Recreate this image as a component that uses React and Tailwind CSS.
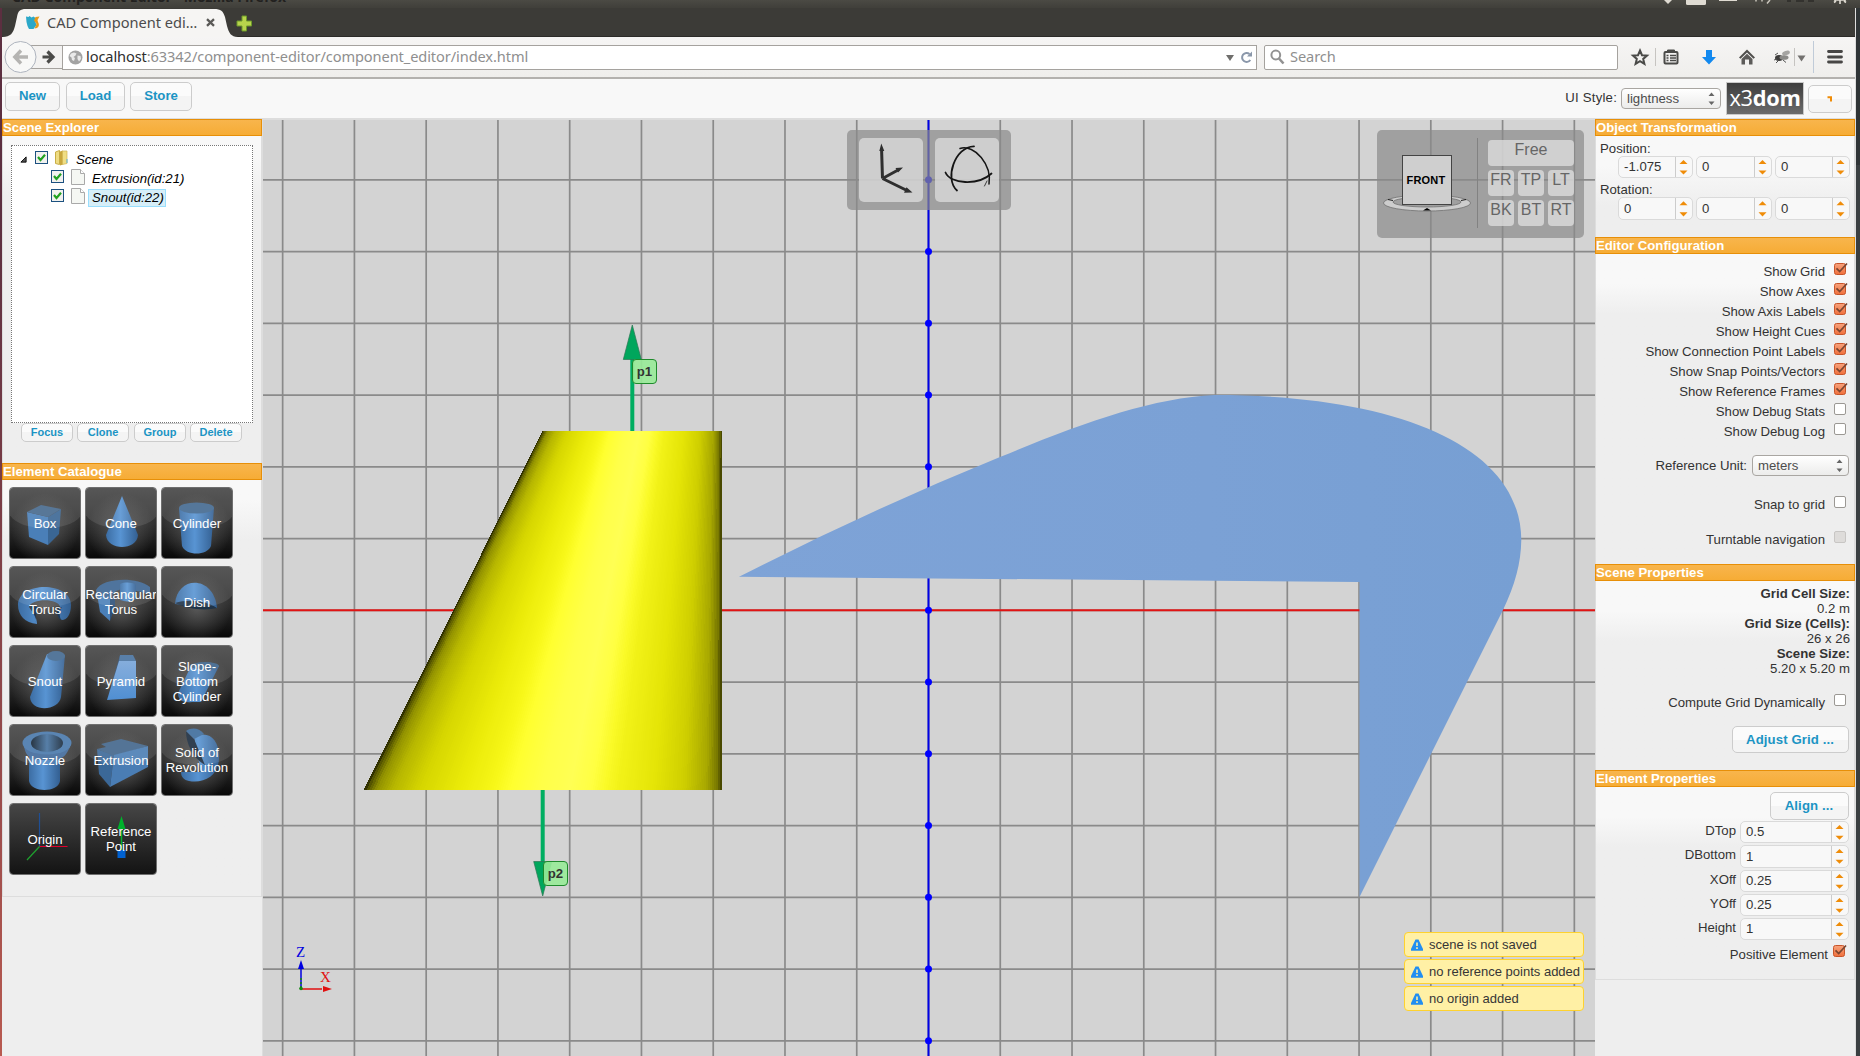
import React from "react";

const lerp = (a, b, t) => a + (b - a) * t;

/* ---------- small shared widgets ---------- */

function PanelHeading({ children }) {
  return (
    <div className="h-[17px] shrink-0 w-[260px] whitespace-nowrap border border-[#e78f08] bg-linear-to-b from-[#f8b54c] to-[#f6ac35] text-[13.200px] font-bold leading-[15px] text-white">
      {children}
    </div>
  );
}

function PanelBody({ className, children }) {
  return (
    <div className={"w-[260px] shrink-0 border-x border-[#dddddd] bg-[#eeeeee] " + className}>{children}</div>
  );
}

function Btn({ className, children }) {
  return (
    <button
      className={
        "flex items-center justify-center rounded-[5px] border border-[#cccccc] bg-linear-to-b from-[#fbfbfb] from-50% to-[#f4f4f4] to-50% font-bold text-[#1c94c4] " +
        className
      }
    >
      {children}
    </button>
  );
}

function Spinner({ value, className }) {
  return (
    <div className={"flex rounded-[5px] border border-[#dadada] bg-[#f8f8f8] " + className}>
      <div className="flex flex-1 items-center pl-[5px] text-[13.200px] text-[#333]">{value}</div>
      <svg className="h-full w-[17px] shrink-0 border-l border-[#cccccc]" viewBox="0 0 16 20" preserveAspectRatio="none">
        <path d="M3.500 7h8l-4-4zM3.500 13.500h8l-4 4z" fill="#ef8c08" />
      </svg>
    </div>
  );
}

function Check({ on, disabled }) {
  if (on)
    return (
      <svg width="14" height="14" viewBox="0 0 14 14" className="shrink-0">
        <defs>
          <linearGradient id="ck" x2="0" y2="1">
            <stop offset="0" stopColor="#f7a27c" />
            <stop offset="1" stopColor="#f0703c" />
          </linearGradient>
        </defs>
        <rect x="0.5" y="1.5" width="11" height="11" rx="2" fill="url(#ck)" stroke="#c8552a" />
        <path d="M2.500 6.300l3.200 3.200L13 1.500" fill="none" stroke="#7a4630" strokeWidth="1.700" />
      </svg>
    );
  return (
    <div className="flex h-[14px] w-[14px] shrink-0 items-end">
      <div className={"mb-px h-3 w-3 rounded-[2px] border " + (disabled ? "border-[#c8c6c4] bg-[#dedcda]" : "border-[#9b9894] bg-white")} />
    </div>
  );
}

function Select({ value, className }) {
  return (
    <div className={"flex items-center justify-between rounded-[4px] border border-[#a9a6a2] bg-linear-to-b from-white to-[#ececeb] pl-[5px] pr-[5px] text-[13.200px] text-[#4c4c4c] " + className}>
      <span>{value}</span>
      <svg width="7" height="13" viewBox="0 0 7 13">
        <path d="M0.500 4h6L3.500 0.500zM0.500 9.500h6L3.500 13z" fill="#666" />
      </svg>
    </div>
  );
}

/* ---------- browser chrome ---------- */

function DesktopBar() {
  return (
    <div className="flex h-2 shrink-0 justify-between overflow-hidden bg-linear-to-b from-[#4b4a44] to-[#403f3a]">
      <div className="-mt-[13px] ml-3 h-[18px] whitespace-pre font-['Open_Sans',sans-serif] text-[14px] font-bold leading-[19px] text-[#22211f]">
        {"CAD Component Editor - Mozilla Firefox"}
      </div>
      <svg width="210" height="8" viewBox="1650 0 210 8">
        <path d="M1664 0h8l-4 4z" fill="#dfdbd2" />
        <rect x="1686" y="-4" width="20" height="9" rx="1.5" fill="#dfdbd2" />
        <rect x="1719" y="-3" width="18" height="4" fill="#dfdbd2" />
        <path d="M1756 0v1.5M1762 0v1.5M1770 0l-3 3.5" stroke="#c9c5bc" strokeWidth="1.5" />
        <path d="M1787 1h4M1796 1h8M1808 1h6" stroke="#2c2b28" strokeWidth="1.5" />
        <path d="M1834 0h12M1840 0v4M1836 1l-2 1.500M1844 1l2 1.500" stroke="#dfdbd2" strokeWidth="1.600" fill="none" />
      </svg>
    </div>
  );
}

function TabStrip() {
  return (
    <div className="flex h-[29px] shrink-0 border-b border-[#2c2b28] bg-[#3c3b37]">
      <div className="relative flex h-[29px] w-[234px] items-center">
        <svg className="absolute left-0 top-0" width="238" height="29" viewBox="2 8 238 29">
          <path d="M2 37C11 37 13 33 15 26L17 17C18 11 20 9 26 9H214C221 9 223 11 225 17L227 26C229 33 231 37 238 37Z" fill="#f6f5f3" />
        </svg>
        <svg className="relative ml-6 shrink-0" width="14" height="13" viewBox="0 0 14 13">
          <path d="M0 0.500l2.500.5 1-1 2 1.500 2-1 2 1.500-.5 3 1.500 4-3 4H3L1.500 10 0.500 6z" fill="#2ba8c8" />
          <path d="M13.500 0.500l-4 .5-1.500 3.500 2.500 3.500-2 4.500c4 0 5.500-3.500 3.500-6.500l-.5-2z" fill="#e79a1c" />
        </svg>
        <span className="relative ml-[7px] w-[151px] whitespace-nowrap font-['Noto_Sans',sans-serif] text-[14.600px] text-[#4c4c4c]">CAD Component edi…</span>
        <svg className="relative ml-[8px]" width="9" height="9" viewBox="0 0 9 9">
          <path d="M1 1.200l7 6.600M8 1.200L1 7.800" stroke="#5b5a57" strokeWidth="2.300" />
        </svg>
      </div>
      <svg className="mt-[7px]" width="17" height="17" viewBox="0 0 17 17">
        <path d="M6 1h4.500v5H15.500v5H10.500v5H6v-5H1V6h5z" fill="#b8d44c" stroke="#6d9a2a" />
      </svg>
    </div>
  );
}

function NavBar() {
  return (
    <div className="flex h-[42px] shrink-0 items-center border-b-2 border-[#b3b1ae] bg-linear-to-b from-[#f6f5f4] to-[#efeeec]">
      <svg className="ml-[2px] shrink-0" width="58" height="34" viewBox="4 40 58 34">
        <rect x="22" y="45.500" width="42" height="23" fill="#f3f2f1" stroke="#a5a29e" />
        <circle cx="20.500" cy="57" r="15.500" fill="#f8f8f7" stroke="#aeb4be" />
        <path d="M28 57H16M21 50.500L14.800 57l6.200 6.500" fill="none" stroke="#b5b4b2" strokeWidth="3.400" />
        <path d="M42.500 57h9M47.500 51.500l5.500 5.500-5.500 5.500" fill="none" stroke="#4a4a48" strokeWidth="3.200" />
      </svg>
      <div className="flex h-[25px] w-[1195px] shrink-0 items-center border border-[#a5a29e] bg-white">
        <svg className="ml-[5px] shrink-0" width="15" height="15" viewBox="0 0 15 15">
          <circle cx="7.500" cy="7.500" r="7" fill="#a3a3a3" />
          <path d="M3 3.500l3-1 2.500 1-1 2-2 1.500 1.500 1-1 3-2-1-.5-2.500L1.500 6zM9.500 5.500l3 .5.500 3-2 2.500-1.500-2.500z" fill="#e9e9e9" />
        </svg>
        <div className="ml-[3px] flex-1 whitespace-nowrap font-['Noto_Sans',sans-serif] text-[14.600px] text-[#8f8f8f]">
          <span className="tracking-[-0.100px] text-[#2e2e2e]">localhost</span>
          <span className="tracking-[-0.090px]">:63342/component-editor/component_editor/index.html</span>
        </div>
        <svg width="32" height="14" viewBox="0 0 32 14" className="mr-px">
          <path d="M3 5h8L7 11z" fill="#6f6e6c" />
          <path d="M26.500 4a4.500 4.500 0 1 0 .8 6" fill="none" stroke="#8a97aa" strokeWidth="2" />
          <path d="M24 6.500h5V1.500z" fill="#8a97aa" />
        </svg>
      </div>
      <div className="ml-[7px] flex h-[25px] w-[354px] shrink-0 items-center rounded-[2px] border border-[#a5a29e] bg-white">
        <svg className="ml-[5px]" width="15" height="16" viewBox="0 0 15 16">
          <circle cx="5.800" cy="6" r="4.400" fill="none" stroke="#929292" strokeWidth="2" />
          <path d="M9 9.500l4.500 5" stroke="#929292" strokeWidth="2.600" />
        </svg>
        <span className="ml-[5px] font-['Noto_Sans',sans-serif] text-[14.600px] tracking-[-0.100px] text-[#8f8f8f]">Search</span>
      </div>
      <svg className="shrink-0" width="238" height="40" viewBox="1618 37 238 40">
        <path d="M1640 50.500l2 4.700 5 .4-3.800 3.300 1.200 5-4.400-2.700-4.400 2.700 1.200-5-3.800-3.300 5-.4z" fill="none" stroke="#4a4a48" strokeWidth="2" />
        <path d="M1655.500 48v18" stroke="#c6c4c1" />
        <rect x="1664.500" y="52" width="13" height="11.500" rx="1" fill="none" stroke="#4a4a48" strokeWidth="2" />
        <path d="M1667.500 52v-2h7v2" fill="#4a4a48" stroke="#4a4a48" />
        <path d="M1666.500 55.500h2M1670 55.500h6M1666.500 58h2M1670 58h6M1666.500 60.500h2M1670 60.500h6" stroke="#4a4a48" strokeWidth="1.300" />
        <path d="M1706 50h6v7h4l-7 7.500-7-7.500h4z" fill="#1289ef" />
        <path d="M1747 49.500l8 8-1.500 1.300-6.500-6.300-6.500 6.300-1.500-1.300z" fill="#4f4e4c" />
        <path d="M1741.500 59l5.500-5.300 5.500 5.300v5.500h-3.500v-5h-4v5h-3.500z" fill="#5c5b59" />
        <ellipse cx="1779" cy="58" rx="4" ry="3" fill="#3d3c3b" />
        <ellipse cx="1786" cy="53" rx="4" ry="2.200" fill="#a5a4a2" transform="rotate(-18 1786 53)" />
        <ellipse cx="1784" cy="57.500" rx="4.500" ry="2.300" fill="#8b8a88" />
        <path d="M1775 55l3-2M1774 60l3-1M1778 61l-2 2M1783 60l3 2.500" stroke="#555" />
        <path d="M1794.500 48v18" stroke="#c6c4c1" />
        <path d="M1797.500 55.500h8l-4 6z" fill="#73716f" />
        <path d="M1813.500 41v32" stroke="#c0cbd8" />
        <path d="M1828.500 51.500h13M1828.500 57h13M1828.500 62h13" stroke="#474645" strokeWidth="2.800" strokeLinecap="round" />
      </svg>
    </div>
  );
}

/* ---------- page header ---------- */

function PageHeader() {
  return (
    <header className="flex h-10 shrink-0 justify-between border-b border-[#dddddd] bg-[#f8f8f8] text-[13.200px]">
      <div className="flex pl-[3px] pt-[3px]">
        <Btn className="h-[29px] w-[55px] pb-px">New</Btn>
        <Btn className="ml-[6px] h-[29px] w-[59px] pb-px">Load</Btn>
        <Btn className="ml-[5px] h-[29px] w-[62px] pb-px">Store</Btn>
      </div>
      <div className="flex pr-[3px] text-[#333]">
        <span className="mt-[11px] leading-[16px] tracking-[0.200px]">UI Style:</span>
        <Select value="lightness" className="ml-[4px] mt-[9px] h-[21px] w-[100px]" />
        <div className="ml-[5px] mt-[3px] flex h-[33px] w-[78px] items-center justify-center border border-[#c9c9c9] bg-linear-to-b from-[#3d3d3d] to-[#6c6c6c] font-['Open_Sans',sans-serif] text-[21.800px] leading-none tracking-[-0.300px] text-white">
          <span className="pb-[1px]">
            x3<b>dom</b>
          </span>
        </div>
        <Btn className="ml-1 mt-[6px] h-[28px] w-[44px]">
          <svg width="6" height="6" viewBox="0 0 6 6">
            <path d="M0.500 1.200h3.500v4.300" fill="none" stroke="#ef8c08" strokeWidth="2" />
          </svg>
        </Btn>
      </div>
    </header>
  );
}

/* ---------- left side ---------- */

function TreeCheck() {
  return (
    <svg width="13" height="13" viewBox="0 0 13 13" className="shrink-0">
      <rect x="0.500" y="0.500" width="12" height="12" fill="#f1f1ef" stroke="#1c5180" />
      <path d="M3 6l2.500 3L10 3.800" fill="none" stroke="#21a121" strokeWidth="2.200" />
    </svg>
  );
}

function PageIcon() {
  return (
    <svg width="14" height="16" viewBox="0 0 14 16" className="shrink-0">
      <path d="M0.500 0.500h9l4 4v11h-13z" fill="#f5f7f3" stroke="#a9a9a9" />
      <path d="M9.500 0.500v4h4" fill="#fff" stroke="#a9a9a9" />
    </svg>
  );
}

function SceneExplorer() {
  return (
    <PanelBody className="h-[327px] bg-linear-to-b from-[#f8f8f8] from-[20px] to-[#eeeeee] to-[60px] pt-[9px]">
      <div className="ml-2 h-[278px] w-[242px] border border-dotted border-[#777] bg-white text-[13.200px] italic text-black">
        <div className="mt-[4px] flex h-[19px] items-center">
          <svg className="ml-2" width="7" height="7" viewBox="0 0 8 7">
            <path d="M1 6.500h6v-6z" fill="#555" stroke="#000" />
          </svg>
          <div className="ml-2 -mt-1"><TreeCheck /></div>
          <svg className="ml-[7px] -mt-[3px]" width="13" height="16" viewBox="0 0 13 16">
            <path d="M0.500 2l4-1.500v14l-4-1z" fill="#efdc82" stroke="#c9ae45" />
            <path d="M5 1.500l3-1v14l-3 1z" fill="#c9a63c" />
            <path d="M7.500 1h4.500v12.500l-4.500 1z" fill="#f0dd83" stroke="#d1b653" strokeWidth=".7" />
            <path d="M12 9v4" stroke="#5cb4e0" />
          </svg>
          <span className="ml-2">Scene</span>
        </div>
        <div className="flex h-[19px] items-center">
          <div className="ml-[39px] -mt-1"><TreeCheck /></div>
          <div className="ml-[7px] -mt-[3px]"><PageIcon /></div>
          <span className="ml-[7px]">Extrusion(id:21)</span>
        </div>
        <div className="flex h-[19px] items-center">
          <div className="ml-[39px] -mt-1"><TreeCheck /></div>
          <div className="ml-[7px] -mt-[3px]"><PageIcon /></div>
          <span className="ml-[3px] flex h-[18px] w-[78px] items-center whitespace-nowrap border border-[#99defd] bg-[#d6eef8] pl-[3px]">Snout(id:22)</span>
        </div>
      </div>
      <div className="ml-[18px] flex text-[11px]">
        <Btn className="h-[19px] w-[52px]">Focus</Btn>
        <Btn className="ml-1 h-[19px] w-[52px]">Clone</Btn>
        <Btn className="ml-[5px] h-[19px] w-[52px]">Group</Btn>
        <Btn className="ml-1 h-[19px] w-[52px]">Delete</Btn>
      </div>
    </PanelBody>
  );
}

const D = "url(#bDark)";
const B = "url(#bSide)";
const F = "url(#bFlat)";

const TILES = [
  ["Box", <><path d="M18 25l21 5v28l-19-8z" fill="#4a7fb8" /><path d="M39 30l13-8-2 25-11 11z" fill="#3a6694" /><path d="M18 25l14-7 20 4-13 8z" fill="#46688c" /></>],
  ["Cone", <path d="M37 9L21 48c1 16 31 16 32 0z" fill={B} />],
  ["Cylinder", <><path d="M18 21l3 38c4 10 25 10 29 0l3-38z" fill={B} /><ellipse cx="35.500" cy="21" rx="17.500" ry="5.500" fill="#42688f" /></>],
  ["Circular\nTorus", <><path d="M9 39C9 15 62 15 62 39c0 9-4 15-9 15-4-2-5-7-2-13-1-9-29-9-31 0 3 5 8 9 8 17C16 57 9 49 9 39z" fill={B} /><path d="M27 58c-1-7 0-12 3-16-3-2-6-2-8-1 3 6 5 11 5 17zM52 54c-2-6-2-9 1-13l-5 2c0 5 1 9 4 11z" fill="#1d3a5b" /></>],
  ["Rectangular\nTorus", <><path d="M11 24c6-12 40-14 54-3v7l-13-3c-9-3-20-3-24 3l-3 7-13-5z" fill="#3b6592" /><path d="M35 18c5-2 12-2 16 1v14c-5 3-11 3-16 1z" fill={B} /><path d="M12 28l13 5v22l-10-9z" fill="#4a7fb8" /><path d="M25 33l5-3v10l-5 15z" fill="#2c5079" /></>],
  ["Dish", <><path d="M14 38C16 9 53 9 56 42z" fill={B} /><path d="M14 37c12-4 30-3 42 5-12 3-30 1-42-5z" fill="#1f3348" /></>],
  ["Snout", <><path d="M38 9l-17 43c1 16 29 14 31 0l4-42z" fill={B} /><ellipse cx="47" cy="11" rx="9" ry="5" fill="#42688f" /></>],
  ["Pyramid", <><path d="M35 10l-13 45 13-38z" fill="#2f5075" /><path d="M35 10l13 0 3 6H34z" fill="#47719f" /><path d="M34 16h17v37l-29 2z" fill={F} /></>],
  ["Slope-\nBottom\nCylinder", <><path d="M30 21L17 48c0 7 4 10 14 9h9l18-36z" fill={B} /><ellipse cx="44" cy="21" rx="14" ry="4" fill="#3c6389" /></>],
  ["Nozzle", <><path d="M20 25v32c2 12 29 12 31 0V25z" fill={B} /><path d="M14 17c2 14 5 17 14 19h18c9-2 12-5 16-16z" fill="#40699a" /><ellipse cx="38" cy="19" rx="24.500" ry="11.500" fill="#4878ab" /><ellipse cx="38" cy="19" rx="16" ry="9" fill={D} /></>],
  ["Extrusion", <><path d="M12 25l17 6-4 32-11-13z" fill="#3b6898" /><path d="M16 20l20-5 27 7-34 10-17-7 9-2z" fill="#41658b" /><path d="M29 31l34-9v21L25 63z" fill="#4a7db4" /></>],
  ["Solid of\nRevolution", <><path d="M33 13c15-8 26 4 25 21 0 18-16 26-30 23-5-1-8-4-8-9l20 0z" fill={B} /><path d="M25 7c0 14 8 28 19 34L33 15z" fill="#1a2b3e" /><path d="M25 7c6-4 13-3 18 3l-10 5z" fill="#3d6b9b" /></>],
  ["Origin", <><path d="M30.500 10v33" stroke="#1f4f95" strokeWidth="1.200" /><path d="M30.500 43.500h28" stroke="#e0002c" strokeWidth="1.200" /><path d="M30.500 43.500L18 57" stroke="#1fa22f" strokeWidth="1.200" /></>],
  ["Reference\nPoint", <><path d="M36.500 13l4 13h-8z" fill="#00b22c" /><path d="M36.500 25v22" stroke="#00b22c" strokeWidth="1.500" /><rect x="32.500" y="47" width="8" height="8" fill="#0061d1" /></>],
];

function Tile({ name, shape, flat }) {
  return (
    <div className="relative flex h-[72px] w-[72px] items-center justify-center overflow-hidden rounded-[4px] border border-[#6f6f6f]">
      <svg className="absolute left-0 top-0" width="72" height="72" viewBox="1 1 72 72">
        <rect width="74" height="74" fill={flat ? "url(#tFlat)" : "url(#tDark)"} />
        {!flat && <ellipse cx="36" cy="42" rx="34" ry="36" fill="url(#tGlow)" />}
        {shape}
        {!flat && <path d="M0 0h73v26C66 46 7 46 0 26z" fill="#fff" opacity=".1" />}
      </svg>
      <span className="relative -mx-2 whitespace-pre text-center text-[13.200px] leading-[15px] text-white">{name}</span>
    </div>
  );
}

function ElementCatalogue() {
  return (
    <PanelBody className="h-[417px] border-b bg-linear-to-b from-[#f8f8f8] from-[20px] to-[#eeeeee] to-[60px] pt-[7px]">
      <svg width="0" height="0" className="absolute">
        <defs>
          <linearGradient id="tDark" x2="0" y2="1"><stop offset="0" stopColor="#444" /><stop offset=".5" stopColor="#303030" /><stop offset="1" stopColor="#050505" /></linearGradient>
          <linearGradient id="tFlat" x2="0" y2="1"><stop offset="0" stopColor="#474747" /><stop offset="1" stopColor="#111" /></linearGradient>
          <radialGradient id="tGlow"><stop offset="0" stopColor="#6c6c6c" stopOpacity=".7" /><stop offset="1" stopColor="#666" stopOpacity="0" /></radialGradient>
          <linearGradient id="bSide"><stop offset="0" stopColor="#3c6da3" /><stop offset=".45" stopColor="#5894d3" /><stop offset="1" stopColor="#335f91" /></linearGradient>
          <linearGradient id="bFlat" x2="0" y2="1"><stop offset="0" stopColor="#77a4d8" /><stop offset="1" stopColor="#508fd2" /></linearGradient>
          <linearGradient id="bDark"><stop offset="0" stopColor="#111f2e" /><stop offset=".5" stopColor="#44719f" /><stop offset="1" stopColor="#17283a" /></linearGradient>
        </defs>
      </svg>
      <div className="ml-[6px] grid w-[224px] grid-cols-[repeat(3,72px)] gap-x-1 gap-y-[7px]">
        {TILES.map(([name, shape], i) => (
          <Tile key={name} name={name} shape={shape} flat={i > 11} />
        ))}
      </div>
    </PanelBody>
  );
}

/* ---------- 3D view ---------- */

const STOPS = [
  [0, 30, 0], [0.008, 80, 0], [0.03, 145, 0], [0.07, 182, 0], [0.14, 214, 0], [0.24, 234, 8],
  [0.33, 247, 24], [0.38, 255, 48], [0.46, 255, 72], [0.54, 255, 84], [0.6, 255, 66], [0.64, 250, 40], [0.68, 242, 24],
  [0.79, 228, 6], [0.88, 206, 0], [0.95, 168, 0], [0.985, 120, 0], [1, 60, 0],
];

function yellowAt(u) {
  const i = Math.max(1, STOPS.findIndex((s) => s[0] >= u));
  const a = STOPS[i - 1];
  const b = STOPS[i];
  const t = (u - a[0]) / (b[0] - a[0]);
  const v = Math.round(lerp(a[1], b[1], t));
  return `rgb(${v},${v},${Math.round(lerp(a[2], b[2], t))})`;
}

function Snout() {
  const n = 160;
  const bend = (u) => u + 0.14 * u * (1 - u);
  return (
    <g shapeRendering="crispEdges">
      {Array.from({ length: n }, (_, i) => {
        const u0 = i / n;
        const top = lerp(542.5, 721.7, u0);
        const bot = lerp(364, 721.7, bend(u0));
        return <path key={i} d={`M${top} 431H721.700V789.500H${bot}Z`} fill={yellowAt((i + 0.5) / n)} />;
      })}
    </g>
  );
}

function Viewport() {
  const xs = Array.from({ length: 19 }, (_, i) => 928.5 + (i - 9) * 71.76);
  const ys = Array.from({ length: 13 }, (_, i) => 610.3 + (i - 6) * 71.75);
  return (
    <main className="relative h-[937px] w-[1332px] shrink-0 overflow-hidden border-t border-[#dddddd] bg-[#d3d3d3]">
      <svg width="1332" height="936" viewBox="263 120 1332 936">
        <defs>
          <linearGradient id="ext"><stop offset="0" stopColor="#7ea3d7" /><stop offset=".6" stopColor="#7ba1d5" /><stop offset="1" stopColor="#779fd3" /></linearGradient>
        </defs>
        {xs.map((x) => <path key={x} d={`M${x} 119V1056`} stroke="#8a8a8a" strokeWidth="1.700" />)}
        {ys.map((y) => <path key={y} d={`M263 ${y}H1595`} stroke="#8a8a8a" strokeWidth="1.700" />)}
        <path d="M263 610.200H1595" stroke="#e01414" strokeWidth="2" />
        <path d="M928.500 119V1056" stroke="#0000e6" strokeWidth="2" />
        {ys.map((y) => <circle key={y} cx="928.500" cy={y} r="3.500" fill="#0000ff" />)}
        <path d="M739 576.800Q870 510 1000 457C1080 424 1150 398 1215 395C1400 395 1521 447 1521.300 540C1521 563 1515 585 1503 610L1359.500 897V582Z" fill="url(#ext)" />
        <path d="M632.300 358V432" stroke="#00ae62" strokeWidth="4" />
        <path d="M632.300 325l9 34.500h-18z" fill="#00a65c" stroke="#2c7653" strokeWidth=".7" />
        <path d="M542.700 789V862" stroke="#00ae62" strokeWidth="4" />
        <path d="M542.700 896l9-34.500h-18z" fill="#00a65c" stroke="#2c7653" strokeWidth=".7" />
        <Snout />
        <g strokeWidth="1.500">
          <path d="M301 988V968" stroke="#0000e0" />
          <path d="M301 960l3 9h-6z" fill="#0000e0" />
          <path d="M301 989H322" stroke="#e01010" />
          <path d="M332 989l-9-3v6z" fill="#e01010" />
          <circle cx="301" cy="988.500" r="1.800" fill="#118811" />
          <path d="M301 988v-12" stroke="#118811" strokeDasharray="2 2" />
        </g>
        <text x="296" y="957" fill="#0000e0" className="font-['Liberation_Serif',serif] text-[15px]">Z</text>
        <text x="320" y="982" fill="#e01010" className="font-['Liberation_Serif',serif] text-[15px]">X</text>
      </svg>

      <div className="absolute left-[369px] top-[239px] flex h-[25px] w-[25px] items-center justify-center rounded-[4px] border border-[#1f8a2c] bg-[#98eb98]/90 text-[13.200px] font-bold text-[#333]">p1</div>
      <div className="absolute left-[280px] top-[741px] flex h-[25px] w-[25px] items-center justify-center rounded-[4px] border border-[#1f8a2c] bg-[#98eb98]/90 text-[13.200px] font-bold text-[#333]">p2</div>

      <div className="absolute left-[584px] top-[10px] flex h-20 w-[164px] items-center justify-center gap-3 rounded-[5px] bg-[#8a8a8a]/70">
        <div className="h-16 w-16 rounded-[5px] bg-[#dedede]/75">
          <svg width="64" height="64" viewBox="859 138 64 64">
            <path d="M882.500 178.500L881.600 150M882.500 178.500L899 169.500M882.500 178.500L907 190.500" stroke="#2f2f2f" strokeWidth="3" />
            <path d="M881.300 143.500l3 7.500h-5zM903 167.500l-5 5-2.500-4.500zM912.500 192.500l-8.500.3 2.500-5.500z" fill="#2f2f2f" />
          </svg>
        </div>
        <div className="h-16 w-16 rounded-[5px] bg-[#dedede]/75">
          <svg width="64" height="64" viewBox="935 138 64 64" fill="none" stroke="#151515" strokeWidth="1.800" strokeLinecap="round">
            <path d="M974 146.300C955 146.500 944 179 957 190.500" />
            <path d="M960 148.500C975 144 992 165 989 184" strokeWidth="1.500" />
            <path d="M945.500 172.500C950 184 978 186 991.500 173.500" />
            <path d="M984.500 186l2.500-5" strokeWidth=".8" />
          </svg>
        </div>
      </div>

      <div className="absolute left-[1114px] top-[10px] flex h-[108px] w-[207px] rounded-[5px] bg-[#8a8a8a]/70">
        <svg className="shrink-0" width="111" height="108" viewBox="1377 130 111 108">
          <ellipse cx="1427" cy="203" rx="43.500" ry="8" fill="#cdcdcd" stroke="#666" strokeWidth=".7" />
          <ellipse cx="1427" cy="202" rx="34" ry="5" fill="#a0a0a0" stroke="#666" strokeWidth=".7" />
          <rect x="1402.500" y="155.500" width="49" height="49" fill="#cfcfcf" stroke="#444" />
          <text x="1426" y="184" textAnchor="middle" className="font-['Liberation_Sans',sans-serif] text-[11px] font-bold" letterSpacing=".2">FRONT</text>
          <path d="M1423 210.500h8l-4-2.500z" fill="#000" />
          <path d="M1388 199.500l5 1M1461 200.500l5-1" stroke="#222" strokeWidth="1.200" />
          <path d="M1477.500 138v90" stroke="#828282" />
        </svg>
        <div className="mt-[10px] grid h-[86px] w-[86px] grid-cols-3 grid-rows-3 gap-1 text-center text-[16px] leading-[18px] text-[#666]">
          <div className="col-span-3 rounded-[4px] bg-[#e0e0e0]/75 pt-px">Free</div>
          {["FR", "TP", "LT", "BK", "BT", "RT"].map((t) => (
            <div key={t} className="rounded-[4px] bg-[#e0e0e0]/75 pt-px">{t}</div>
          ))}
        </div>
      </div>

      <div className="absolute left-[1141px] top-[812px] flex w-[180px] flex-col gap-[2px]">
        {["scene is not saved", "no reference points added", "no origin added"].map((m) => (
          <div key={m} className="flex h-[25px] items-center whitespace-nowrap rounded-[4px] border border-[#fed22f] bg-[#fff0a5] pl-[6px] text-[13px] text-[#363636]">
            <svg width="12" height="12" viewBox="0 0 12 12" className="mr-[6px] shrink-0">
              <path d="M4.500 0.500h3L12 10v1.800H0V10z" fill="#228ef1" />
              <path d="M6 3.500v3.500M6 8.300v1.700" stroke="#fff0a5" strokeWidth="1.600" />
            </svg>
            {m}
          </div>
        ))}
      </div>
    </main>
  );
}

/* ---------- right side ---------- */

function CheckRow({ label, on, disabled, className }) {
  return (
    <div className={"flex h-5 justify-end " + className}>
      <span className="leading-[20px]">{label}</span>
      <div className="ml-[9px] mr-[6px]"><Check on={on} disabled={disabled} /></div>
    </div>
  );
}

const CONFIG = ["Show Grid", "Show Axes", "Show Axis Labels", "Show Height Cues", "Show Connection Point Labels", "Show Snap Points/Vectors", "Show Reference Frames"];

const PROPS = [["DTop", "0.5"], ["DBottom", "1"], ["XOff", "0.25"], ["YOff", "0.25"], ["Height", "1"]];

function RightPanel() {
  return (
    <aside className="h-[937px] w-[260px] shrink-0 bg-[#eeeeee] text-[13.200px] text-[#333]">
      <PanelHeading>Object Transformation</PanelHeading>
      <PanelBody className="h-[101px] bg-linear-to-b from-[#f8f8f8] from-[30px] to-[#eeeeee] to-[70px] pt-[5px]">
        <div className="pl-1 leading-[15px]">Position:</div>
        <div className="ml-[22px] flex">
          <Spinner value="-1.075" className="h-[22px] w-[75px]" />
          <Spinner value="0" className="ml-[3px] h-[22px] w-[76px]" />
          <Spinner value="0" className="ml-[3px] h-[22px] w-[75px]" />
        </div>
        <div className="pl-1 pt-1 leading-[15px]">Rotation:</div>
        <div className="ml-[22px] flex">
          <Spinner value="0" className="h-[23px] w-[75px]" />
          <Spinner value="0" className="ml-[3px] h-[23px] w-[76px]" />
          <Spinner value="0" className="ml-[3px] h-[23px] w-[75px]" />
        </div>
      </PanelBody>

      <PanelHeading>Editor Configuration</PanelHeading>
      <PanelBody className="h-[310px] bg-linear-to-b from-[#f8f8f8] from-[30px] to-[#eeeeee] to-[60px] pt-2">
        {CONFIG.map((c) => <CheckRow key={c} label={c} on className="" />)}
        <CheckRow label="Show Debug Stats" className="" />
        <CheckRow label="Show Debug Log" className="" />
        <div className="mt-[13px] flex justify-end pr-[5px]">
          <span className="mr-[5px] leading-[21px]">Reference Unit:</span>
          <Select value="meters" className="h-[21px] w-[97px]" />
        </div>
        <CheckRow label="Snap to grid" className="mt-[19px]" />
        <CheckRow label="Turntable navigation" disabled className="mt-[15px]" />
      </PanelBody>

      <PanelHeading>Scene Properties</PanelHeading>
      <PanelBody className="h-[189px] bg-linear-to-b from-[#f8f8f8] from-[30px] to-[#eeeeee] to-[60px] pt-[5px]">
        <div className="pr-1 text-right leading-[15px]">
          <b>Grid Cell Size:</b><div>0.2 m</div>
          <b>Grid Size (Cells):</b><div>26 x 26</div>
          <b>Scene Size:</b><div>5.20 x 5.20 m</div>
        </div>
        <CheckRow label="Compute Grid Dynamically" className="mt-[17px]" />
        <Btn className="ml-auto mr-[5px] mt-[13px] h-[27px] w-[117px] pr-px text-[13.200px] tracking-[0.100px]">Adjust Grid ...</Btn>
      </PanelBody>

      <PanelHeading>Element Properties</PanelHeading>
      <PanelBody className="h-[193px] border-b bg-linear-to-b from-[#f8f8f8] from-[30px] to-[#eeeeee] to-[60px] pt-[5px]">
        <Btn className="mb-px ml-auto mr-[5px] h-[28px] w-[79px] pr-px text-[13.200px] tracking-[0.100px]">Align ...</Btn>
        <div className="flex flex-col gap-[2px]">
          {PROPS.map(([k, v]) => (
            <div key={k} className="flex justify-end pr-[5px]">
              <span className="mr-1 leading-[20px]">{k}</span>
              <Spinner value={v} className="h-[22.300px] w-[109px]" />
            </div>
          ))}
        </div>
        <div className="mt-1 flex justify-end pr-[7px]">
          <span className="mt-px leading-[20px]">Positive Element</span>
          <div className="ml-[5px]"><Check on /></div>
        </div>
      </PanelBody>
    </aside>
  );
}

export default function App() {
  return (
    <div className="flex h-[1056px] w-[1860px] flex-col overflow-hidden bg-[#3c3b37] font-['Liberation_Sans',Arial,sans-serif]">
      <DesktopBar />
      <div className="flex h-[1048px]">
        <div className="w-[2px] shrink-0 bg-linear-to-b from-[#5c2f40] from-20% to-[#b85a50]" />
        <div className="flex w-[1854px] shrink-0 flex-col border-r border-[#dddddd]">
          <TabStrip />
          <NavBar />
          <PageHeader />
          <div className="flex h-[937px]">
            <aside className="h-[937px] w-[261px] shrink-0 border-r border-[#dddddd] bg-[#eeeeee]">
              <PanelHeading>Scene Explorer</PanelHeading>
              <SceneExplorer />
              <PanelHeading>Element Catalogue</PanelHeading>
              <ElementCatalogue />
            </aside>
            <Viewport />
            <RightPanel />
          </div>
        </div>
        <div className="flex-1 bg-linear-to-b from-[#2f3436] from-15% to-[#3a3f41] to-15%" />
      </div>
    </div>
  );
}
